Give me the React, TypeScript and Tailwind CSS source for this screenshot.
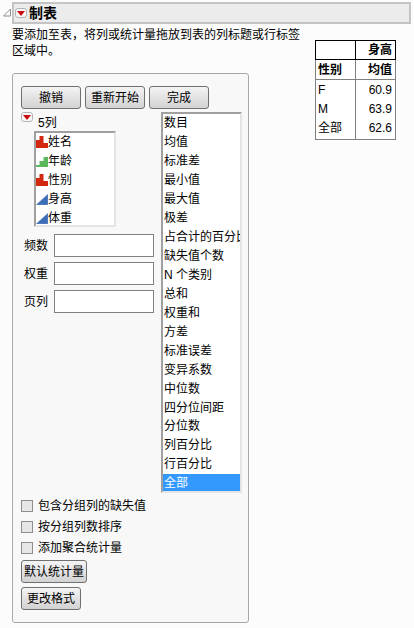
const font = { fontFamily: '"Liberation Sans", "Noto Sans CJK SC", sans-serif' };

function Tri() {
  return (
    <span className="flex h-[10px] w-[12px] shrink-0 items-center justify-center rounded-[3px] border border-[#b4b4b4] bg-[#f8f8f8]">
      <svg width="8" height="5" viewBox="0 0 8 5"><path d="M0 0H8L4 5Z" fill="#cc0a0a" /></svg>
    </span>
  );
}

function Btn({ children, w }: { children: string; w: string }) {
  return (
    <div className={`flex h-[23px] items-center justify-center whitespace-nowrap rounded-[3px] border border-[#707070] bg-gradient-to-b from-[#f4f4f4] to-[#d2d2d2] text-[12px] text-black ${w}`}>
      {children}
    </div>
  );
}

function Bar() {
  return (
    <svg width="12" height="12" viewBox="0 0 12 12" className="shrink-0">
      <path d="M0 4H3.5V12H0ZM3.5 0H7.5V12H3.5ZM7.5 7H12V12H7.5Z" fill="#d2280f" />
    </svg>
  );
}
function Ord() {
  return (
    <svg width="12" height="12" viewBox="0 0 12 12" className="shrink-0">
      <path d="M0 10H3.5V12H0ZM3.5 6H7.5V12H3.5ZM7.5 2H12V12H7.5Z" fill="#5cb85c" />
    </svg>
  );
}
function Cont() {
  return (
    <svg width="12" height="12" viewBox="0 0 12 12" className="shrink-0">
      <path d="M0 12L12 1V12Z" fill="#3a6cb8" stroke="#9aa8c0" strokeWidth="0.5" />
    </svg>
  );
}

const cols: [string, React.ReactNode][] = [
  ["姓名", <Bar />],
  ["年龄", <Ord />],
  ["性别", <Bar />],
  ["身高", <Cont />],
  ["体重", <Cont />],
];
const stats = ["数目","均值","标准差","最小值","最大值","极差","占合计的百分比","缺失值个数","N 个类别","总和","权重和","方差","标准误差","变异系数","中位数","四分位间距","分位数","列百分比","行百分比","全部"];

export default function App() {
  return (
    <div style={font} className="h-[628px] w-[414px] overflow-hidden bg-[#fcfcfc] text-[12px] leading-[16px] text-black">
      <div className="flex pl-[3px] pt-[2px]">
        <svg width="9" height="9" viewBox="0 0 9 9" className="mt-[6px]"><path d="M7.5 1V8H0.5Z" fill="none" stroke="#909090" /></svg>
        <div className="flex h-[22px] w-[399px] items-center gap-[2px] border-2 border-[#c4c4c4] bg-[#ececec] pl-[1px] text-[14px] font-bold">
          <Tri />
          <span>制表</span>
        </div>
      </div>
      <div className="relative pl-[12px]">
        <p className="w-[290px] pt-[3px]">要添加至表，将列或统计量拖放到表的列标题或行标签区域中。</p>
        <div className="mt-[14px] h-[550px] w-[237px] rounded-[3px] border border-[#a8a8a8] bg-[#f8f8f8] pl-[8px] pt-[12px]">
          <div className="flex gap-[4px]">
            <Btn w="w-[60px]">撤销</Btn>
            <Btn w="w-[60px]">重新开始</Btn>
            <Btn w="w-[60px]">完成</Btn>
          </div>
          <div className="mt-[3px] flex">
            <div className="w-[140px]">
              <div className="flex h-[16px]">
                <Tri />
                <span className="ml-[5px] mt-[3px]">5列</span>
              </div>
              <div className="ml-[13px] mt-[3px] h-[96px] w-[82px] border-2 border-t-[#a0a0a0] border-l-[#a0a0a0] border-r-[#e4e4e4] border-b-[#e4e4e4] bg-white">
                {cols.map(([t, i]) => (
                  <div key={t} className="flex h-[18.8px] items-center">{i}<span>{t}</span></div>
                ))}
              </div>
              <div className="mt-[7px] flex flex-col gap-[5px]">
                {["频数","权重","页列"].map((t) => (
                  <div key={t} className="flex items-center">
                    <span className="ml-[3px] w-[30px]">{t}</span>
                    <div className="h-[23px] w-[100px] border border-[#808080] bg-white" />
                  </div>
                ))}
              </div>
            </div>
            <div className="h-[381px] w-[81px] overflow-hidden border-2 border-t-[#a0a0a0] border-l-[#a0a0a0] border-r-[#e4e4e4] border-b-[#e4e4e4] bg-white">
              {stats.map((s) => (
                <div key={s} className={`flex h-[18.95px] items-center overflow-hidden whitespace-nowrap pl-[1px] ${s === "全部" ? "bg-[#3399ff] text-white" : ""}`}>{s}</div>
              ))}
            </div>
          </div>
          <div className="mt-[7px] flex flex-col gap-[9px]">
            {["包含分组列的缺失值","按分组列数排序","添加聚合统计量"].map((t) => (
              <div key={t} className="flex h-[12px] items-center gap-[5px]">
                <span className="h-[12px] w-[12px] border border-[#8e8e8e] bg-[#e6e6e6]" />
                <span>{t}</span>
              </div>
            ))}
          </div>
          <div className="mt-[6px] flex flex-col items-start gap-[4px]">
            <Btn w="w-[66px]">默认统计量</Btn>
            <Btn w="w-[60px]">更改格式</Btn>
          </div>
        </div>
        <table className="absolute left-[315px] top-[16px] w-[81px] table-fixed border-collapse bg-white text-[12px]">
          <tbody>
            <tr className="h-[19px]">
              <td className="w-[40px] border border-black" />
              <td className="border border-black pr-[3px] text-right font-bold">身高</td>
            </tr>
            <tr className="h-[20px]">
              <td className="border border-[#808080] pl-[2px] font-bold">性别</td>
              <td className="border border-[#808080] pr-[3px] text-right font-bold">均值</td>
            </tr>
            <tr>
              <td className="border border-[#808080] pl-[2px] pt-[2px]"><div className="h-[19px]">F</div><div className="h-[19px]">M</div><div className="h-[19px]">全部</div></td>
              <td className="border border-[#808080] pr-[3px] pt-[2px] text-right"><div className="h-[19px]">60.9</div><div className="h-[19px]">63.9</div><div className="h-[19px]">62.6</div></td>
            </tr>
          </tbody>
        </table>
      </div>
    </div>
  );
}
